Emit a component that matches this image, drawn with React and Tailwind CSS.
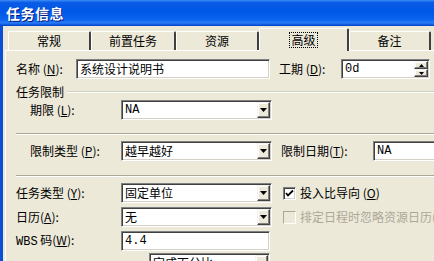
import React from 'react'

/* ── Small pieces ───────────────────────────────────────────── */

const sunken =
  'border border-t-[#808080] border-l-[#808080] border-r-white border-b-white shadow-[inset_1px_1px_0_#404040,inset_-1px_-1px_0_#d4d0c8]'
const raised =
  'border border-t-[#f4f3ee] border-l-[#f4f3ee] border-r-[#404040] border-b-[#404040] shadow-[inset_-1px_-1px_0_#808080,inset_1px_1px_0_#ffffff]'
const mono = "[font-family:'Liberation_Mono',monospace]"

function Label({ text, k, after = ':', className = '' }) {
  return (
    <span className={`whitespace-nowrap shrink-0 ${className}`}>
      {text}(<span className="underline">{k}</span>){after}
    </span>
  )
}

function Arrow({ up }) {
  return (
    <svg width="5" height="3" viewBox="0 0 5 3">
      <path d={up ? 'M2.5 0 L5 3 L0 3Z' : 'M0 0 L5 0 L2.5 3Z'} fill="#000" />
    </svg>
  )
}

function DropButton() {
  return (
    <span className={`w-[13px] h-[16px] bg-[#ece9d8] flex items-center justify-center shrink-0 ${raised}`}>
      <svg width="7" height="4" viewBox="0 0 7 4">
        <path d="M0 0 L7 0 L3.5 4Z" fill="#000" />
      </svg>
    </span>
  )
}

function Select({ value, width, monoText }) {
  return (
    <div className={`h-[20px] shrink-0 bg-white flex items-center pl-[3px] pr-[1px] ${sunken} ${width}`}>
      <span className={`flex-1 truncate ${monoText ? mono : ''}`}>{value}</span>
      <DropButton />
    </div>
  )
}

function Input({ value, width, monoText, children }) {
  return (
    <div className={`h-[20px] shrink-0 bg-white flex items-center pl-[3px] ${sunken} ${width}`}>
      <span className={`flex-1 truncate ${monoText ? mono : ''}`}>{value}</span>
      {children}
    </div>
  )
}

function Separator({ className = '' }) {
  return <div className={`h-[2px] border-t border-t-[#aca899] border-b border-b-white ${className}`} />
}

function Check({ checked, disabled }) {
  return (
    <span
      className={`w-[13px] h-[13px] flex items-center justify-center shrink-0 ${
        disabled
          ? 'bg-[#ece9d8] border border-t-[#aca899] border-l-[#aca899] border-r-white border-b-white'
          : `bg-white ${sunken}`
      }`}
    >
      {checked && (
        <svg width="9" height="9" viewBox="0 0 9 9">
          <path d="M1 4 L3 6.5 L8 1.5" stroke="#000" strokeWidth="1.8" fill="none" />
        </svg>
      )}
    </span>
  )
}

/* ── Tabs ───────────────────────────────────────────────────── */

const TABS = [
  { name: '常规', w: 'w-[83px]' },
  { name: '前置任务', w: 'w-[85px]' },
  { name: '资源', w: 'w-[83px]' },
  { name: '高级', w: 'w-[90px]', active: true },
  { name: '备注', w: 'w-[82px]' },
]

function Tab({ tab }) {
  if (tab.active) {
    return (
      <div
        className={`${tab.w} shrink-0 h-[23px] -mb-[1px] relative z-10 bg-[#ece9d8] rounded-t-[2px] border-t border-l border-t-white border-l-white border-r-2 border-r-[#404040] flex items-start justify-center pt-[4px]`}
      >
        <span className="outline-1 outline-dotted outline-black px-[1px] leading-[14px]">{tab.name}</span>
      </div>
    )
  }
  return (
    <div
      className={`${tab.w} shrink-0 h-[19px] bg-[#ece9d8] rounded-t-[2px] border-t border-l border-t-white border-l-white border-r-2 border-r-[#404040] flex items-start justify-center pt-[2px]`}
    >
      <span className="leading-[14px]">{tab.name}</span>
    </div>
  )
}

/* ── Window ─────────────────────────────────────────────────── */

export default function App() {
  return (
    <div className="w-[434px] h-[261px] overflow-hidden bg-[#ece9d8] text-[12px] text-black flex flex-col [font-family:'Noto_Sans_CJK_SC','Liberation_Sans',sans-serif]">

      {/* ── Title bar ── */}
      <div className="h-[26px] shrink-0 flex items-center pl-[6px] bg-[linear-gradient(to_bottom,#3d8cf7_0%,#0a5be6_10%,#0058e8_45%,#0a64ee_75%,#2a7cf6_88%,#0a52d8_96%,#003dc8_100%)]">
        <span className="text-white font-bold text-[14px] tracking-[0.5px] [text-shadow:1px_1px_0_#0a1a80]">任务信息</span>
      </div>

      <div className="flex flex-1 min-h-0">
        {/* window frame */}
        <div className="w-[3px] bg-[#0a4fd6] shrink-0" />

        <div className="flex-1 flex flex-col pl-[2px] min-w-0">
          {/* ── Tab strip ── */}
          <div className="h-[24px] flex items-end pl-[3px] shrink-0">
            {TABS.map(t => (
              <Tab key={t.name} tab={t} />
            ))}
          </div>

          {/* ── Panel ── */}
          <div className="flex-1 border-t border-l border-white pl-[10px] pt-[8px] flex flex-col min-w-0">

            {/* name / duration */}
            <div className="h-[20px] flex items-center">
              <Label text="名称 " k="N" className="w-[60px]" />
              <Input value="系统设计说明书" width="w-[194px]" />
              <Label text="工期 " k="D" className="ml-[9px] w-[62px]" />
              <Input value="0d" width="w-[89px]" monoText>
                <span className="flex flex-col mr-[1px]">
                  <span className={`w-[14px] h-[8px] bg-[#ece9d8] flex items-center justify-center ${raised}`}>
                    <Arrow up />
                  </span>
                  <span className={`w-[14px] h-[8px] bg-[#ece9d8] flex items-center justify-center ${raised}`}>
                    <Arrow />
                  </span>
                </span>
              </Input>
            </div>

            {/* group: 任务限制 */}
            <div className="h-[14px] mt-[6px] flex items-center">
              <span className="leading-[14px] shrink-0">任务限制</span>
              <div className="flex-1 ml-[3px] h-[2px] border-t border-t-[#d0d0bf] border-b border-b-white" />
            </div>

            <div className="h-[20px] mt-[1px] flex items-center">
              <Label text="期限 " k="L" className="w-[105px] pl-[14px]" />
              <Select value="NA" width="w-[151px]" monoText />
            </div>

            <Separator className="mt-[13px]" />

            <div className="h-[20px] mt-[6px] flex items-center">
              <Label text="限制类型 " k="P" className="w-[105px] pl-[14px]" />
              <Select value="越早越好" width="w-[151px]" />
              <Label text="限制日期" k="T" className="ml-[9px] w-[92px]" />
              <Input value="NA" width="w-[80px]" monoText />
            </div>

            <Separator className="mt-[14px]" />

            {/* type / calendar / wbs */}
            <div className="h-[20px] mt-[6px] flex items-center">
              <Label text="任务类型 " k="Y" className="w-[105px]" />
              <Select value="固定单位" width="w-[151px]" />
              <div className="ml-[11px] flex items-center gap-[4px] shrink-0">
                <Check checked />
                <Label text="投入比导向 " k="O" after="" />
              </div>
            </div>

            <div className="h-[20px] mt-[4px] flex items-center">
              <Label text="日历" k="A" className="w-[105px]" />
              <Select value="无" width="w-[151px]" />
              <div className="ml-[11px] flex items-center gap-[4px] shrink-0 text-[#aca899] whitespace-nowrap">
                <Check disabled />
                <span>排定日程时忽略资源日历(G)</span>
              </div>
            </div>

            <div className="h-[20px] mt-[4px] flex items-center">
              <span className="w-[105px] shrink-0 whitespace-nowrap">
                <span className={mono}>WBS</span> 码(<span className="underline">W</span>):
              </span>
              <Input value="4.4" width="w-[149px]" monoText />
            </div>

            <div className="h-[20px] mt-[2px] flex items-center">
              <div className="w-[133px] shrink-0" />
              <Select value="完成百分比" width="w-[121px]" />
            </div>

          </div>
        </div>
      </div>
    </div>
  )
}
